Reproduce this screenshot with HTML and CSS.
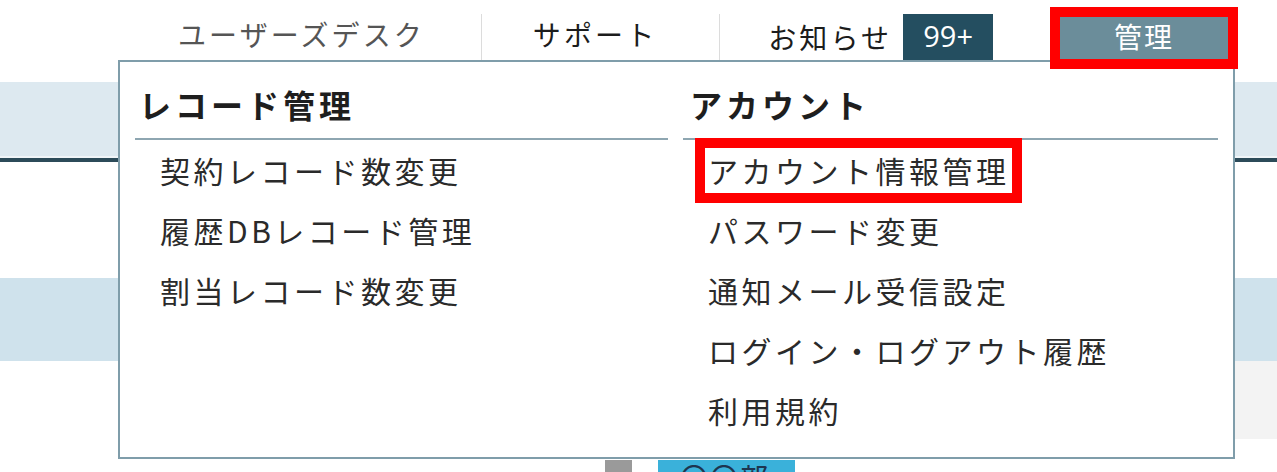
FILE: index.html
```html
<!DOCTYPE html>
<html lang="ja">
<head>
<meta charset="utf-8">
<title>管理メニュー</title>
<link rel="stylesheet" href="styles.css">
</head>
<body>
<header class="topbar">
  <nav class="nav">
    <a class="nav-item nav-muted">ユーザーズデスク</a>
    <a class="nav-item nav-sep nav-support">サポート</a>
    <a class="nav-item nav-sep nav-news">お知らせ<span class="badge">99+</span></a>
    <a class="nav-admin">管理</a>
  </nav>
</header>

<main class="content">
  <div class="band band-top"></div>
  <div class="rule"></div>
  <div class="gap-a"></div>
  <div class="band band-mid"></div>
  <div class="row-grey"></div>
  <div class="bottom-row">
    <span class="handle"></span>
    <span class="dept">〇〇部</span>
  </div>
</main>

<div class="dropdown">
  <section class="col">
    <h2 class="col-title">レコード管理</h2>
    <ul class="menu">
      <li class="menu-item"><a class="menu-link">契約レコード数変更</a></li>
      <li class="menu-item"><a class="menu-link">履歴DBレコード管理</a></li>
      <li class="menu-item"><a class="menu-link">割当レコード数変更</a></li>
    </ul>
  </section>
  <section class="col">
    <h2 class="col-title">アカウント</h2>
    <ul class="menu">
      <li class="menu-item"><a class="menu-link is-marked">アカウント情報管理</a></li>
      <li class="menu-item"><a class="menu-link">パスワード変更</a></li>
      <li class="menu-item"><a class="menu-link">通知メール受信設定</a></li>
      <li class="menu-item"><a class="menu-link">ログイン・ログアウト履歴</a></li>
      <li class="menu-item"><a class="menu-link">利用規約</a></li>
    </ul>
  </section>
</div>
</body>
</html>
```

FILE: styles.css
```css
html, body {
  margin: 0;
  padding: 0;
  height: 472px;
  overflow: hidden;
  background: #ffffff;
  font-family: "Noto Sans CJK JP", "Noto Sans", sans-serif;
  color: #222;
}

.topbar {
  position: relative;
  z-index: 2;
  height: 60px;
}

.nav {
  display: flex;
  align-items: flex-start;
  height: 60px;
  padding-left: 178px;
  box-sizing: border-box;
}

.nav-item {
  display: flex;
  align-items: center;
  font-size: 28px;
  letter-spacing: 3.1px;
  color: #1c1c1c;
  padding-right: 56px;
  margin-top: 14px;
  padding-bottom: 7px;
  line-height: 1;
  height: 46px;
  box-sizing: border-box;
}

.nav-muted {
  color: #555;
}

.nav-sep {
  border-left: 1px solid #dcdcdc;
  padding-left: 51px;
}

.nav-support {
  padding-right: 62px;
}

.nav-news {
  padding-left: 48px;
  padding-right: 0;
  padding-bottom: 0;
}

.badge {
  display: flex;
  align-items: center;
  justify-content: center;
  margin-left: 11px;
  width: 90px;
  height: 46px;
  padding-bottom: 4px;
  box-sizing: border-box;
  background: #244e60;
  color: #fff;
  font-family: "Open Sans", "Noto Sans", sans-serif;
  font-size: 29px;
  letter-spacing: 0;
}

.nav-admin {
  display: flex;
  align-items: center;
  justify-content: center;
  width: 168px;
  height: 42px;
  margin-top: 17px;
  margin-left: 67px;
  padding-bottom: 4px;
  box-sizing: border-box;
  background: #6b8d9a;
  color: #fff;
  font-size: 28px;
  letter-spacing: 2px;
  outline: 10px solid #ff0000;
}

.content {
  display: flex;
  flex-direction: column;
}

.band {
  width: 100%;
}

.band-top {
  margin-top: 22px;
  height: 74px;
  background: #dde9f0;
  border-bottom: 2px solid #f0f5f8;
}

.rule {
  height: 4px;
  background: #2c4b59;
}

.gap-a {
  height: 116px;
}

.band-mid {
  height: 83px;
  background: #cfe2ec;
}

.row-grey {
  height: 78px;
  margin-left: 118px;
  background: #f3f3f3;
}

.bottom-row {
  display: flex;
  margin-top: 21px;
  padding-left: 605px;
  height: 40px;
}

.handle {
  width: 27px;
  height: 40px;
  background: #9a9a9a;
}

.dept {
  margin-left: 26px;
  width: 137px;
  height: 40px;
  background: #3ab1da;
  color: #1d3550;
  font-size: 28px;
  line-height: 28px;
  padding-left: 22px;
  padding-top: 3px;
  box-sizing: border-box;
  letter-spacing: 2px;
}

.dropdown {
  position: absolute;
  z-index: 1;
  left: 118px;
  top: 60px;
  width: 1117px;
  height: 399px;
  box-sizing: border-box;
  border: 2px solid #7f9daa;
  background: #fff;
  display: grid;
  grid-template-columns: 533px 535px;
  column-gap: 15px;
  padding: 0 14px 0 15px;
}

.col-title {
  margin: 0;
  padding: 22px 0 14px 4px;
  height: 78px;
  box-sizing: border-box;
  line-height: 40px;
  font-size: 32px;
  font-weight: 700;
  letter-spacing: 4px;
  color: #1e1e1e;
  border-bottom: 2px solid #8ea6b1;
}

.col + .col .col-title {
  padding-left: 7px;
}

.menu {
  list-style: none;
  margin: 0;
  padding: 0;
}

.menu-item {
  height: 60px;
  display: flex;
  align-items: center;
  padding-left: 22px;
}

.menu-link {
  display: inline-block;
  padding: 0 3px;
  line-height: 45px;
  font-size: 30px;
  letter-spacing: 3.5px;
  color: #2a2a2a;
}

.is-marked {
  outline: 10px solid #ff0000;
  padding-right: 2px;
}
```
